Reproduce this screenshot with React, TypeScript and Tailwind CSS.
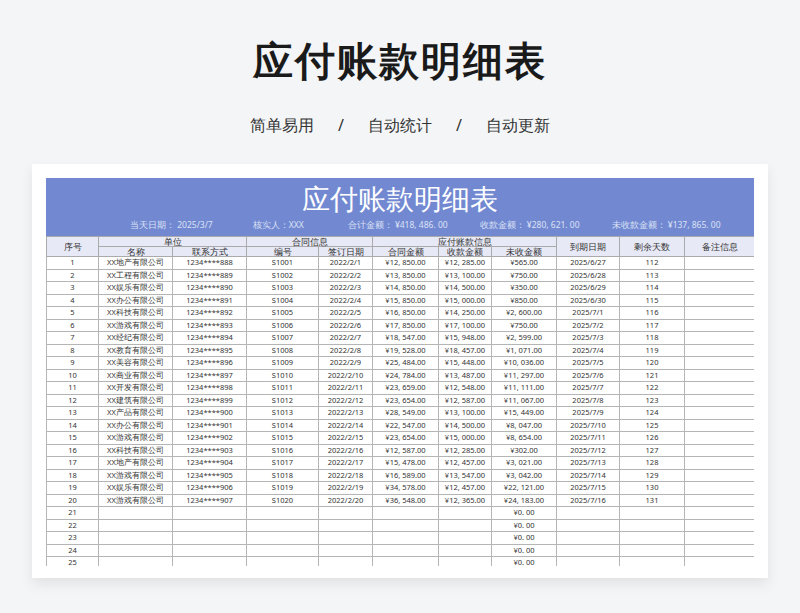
const companies = ["地产", "工程", "娱乐", "办公", "科技", "游戏", "经纪", "教育", "美容", "商业", "开发", "建筑", "产品", "办公", "游戏", "科技", "地产", "游戏", "娱乐", "游戏"];
const contract = [12850, 13850, 14850, 15850, 16850, 17850, 18547, 19528, 25484, 24784, 23659, 23654, 28549, 22547, 23654, 12587, 15478, 16589, 34578, 36548];
const received = [12285, 13100, 14500, 15000, 14250, 17100, 15948, 18457, 15448, 13487, 12548, 12587, 13100, 14500, 15000, 12285, 12457, 13547, 12457, 12365];
const dueDates = ["2025/6/27", "2025/6/28", "2025/6/29", "2025/6/30", "2025/7/1", "2025/7/2", "2025/7/3", "2025/7/4", "2025/7/5", "2025/7/6", "2025/7/7", "2025/7/8", "2025/7/9", "2025/7/10", "2025/7/11", "2025/7/12", "2025/7/13", "2025/7/14", "2025/7/15", "2025/7/16"];

const money = (n: number) =>
  "¥" + n.toLocaleString("en-US", { minimumFractionDigits: 2 }).replace(/,/g, ", ");

const widths = [52, 74, 74, 72, 54, 66, 53, 65, 63, 65, 70];

export default function App() {
  const rows = Array.from({ length: 25 }, (_, i) => i);
  return (
    <div className="h-[613px] w-[800px] overflow-hidden bg-[#f3f5f7] font-['Noto_Sans_CJK_SC',sans-serif]">
      <h1 className="pt-[36px] text-center text-[40px] font-bold leading-[48px] tracking-[2px] text-[#1a1a1a]">
        应付账款明细表
      </h1>
      <div className="mt-[29px] flex justify-center gap-[24px] text-[16px] leading-[24px] text-[#333]">
        <span>简单易用</span>
        <span>/</span>
        <span>自动统计</span>
        <span>/</span>
        <span>自动更新</span>
      </div>

      <div className="mx-[32px] mt-[27px] h-[414px] overflow-hidden bg-white px-[14px] pt-[14px] shadow-[0_6px_12px_rgba(0,0,0,0.08)]">
        <div className="h-[388px] overflow-hidden font-['Liberation_Serif','Noto_Sans_CJK_SC',serif]">
          <div className="bg-[#7289d2] text-white">
            <div className="pt-[4px] text-center font-['Noto_Sans_CJK_SC',sans-serif] text-[28px] font-light leading-[32px]">
              应付账款明细表
            </div>
            <div className="flex h-[22px] items-center gap-[24px] pl-[84px] text-[8.5px] text-[#dbe1f4]">
              <span>当天日期： 2025/3/7</span>
              <span className="ml-[16px]">核实人：XXX</span>
              <span className="ml-[20px]">合计金额： ¥418, 486. 00</span>
              <span className="ml-[8px]">收款金额： ¥280, 621. 00</span>
              <span className="ml-[8px]">未收款金额： ¥137, 865. 00</span>
            </div>
          </div>
          <table className="w-[708px] table-fixed border-collapse text-center text-[7.5px] text-[#333]">
            <colgroup>
              {widths.map((w, i) => (
                <col key={i} style={{ width: w }} />
              ))}
            </colgroup>
            <thead className="bg-[#e7e9f6] text-[8.5px] text-[#333]">
              <tr className="h-[10px] leading-[9px]">
                <th rowSpan={2} className="border border-[#aaa] p-0 font-normal">序号</th>
                <th colSpan={2} className="border border-[#aaa] p-0 font-normal">单位</th>
                <th colSpan={2} className="border border-[#aaa] p-0 font-normal">合同信息</th>
                <th colSpan={3} className="border border-[#aaa] p-0 font-normal">应付账款信息</th>
                <th rowSpan={2} className="border border-[#aaa] p-0 font-normal">到期日期</th>
                <th rowSpan={2} className="border border-[#aaa] p-0 font-normal">剩余天数</th>
                <th rowSpan={2} className="border border-[#aaa] p-0 font-normal">备注信息</th>
              </tr>
              <tr className="h-[10px] leading-[9px]">
                {["名称", "联系方式", "编号", "签订日期", "合同金额", "收款金额", "未收金额"].map((h) => (
                  <th key={h} className="border border-[#aaa] p-0 font-normal">{h}</th>
                ))}
              </tr>
            </thead>
            <tbody>
              {rows.map((i) => {
                const has = i < 20;
                const cells = has
                  ? [
                      String(i + 1),
                      `XX${companies[i]}有限公司`,
                      `1234****${888 + i}`,
                      `S${1001 + i}`,
                      `2022/2/${i + 1}`,
                      money(contract[i]),
                      money(received[i]),
                      money(contract[i] - received[i]),
                      dueDates[i],
                      String(112 + i),
                      "",
                    ]
                  : [String(i + 1), "", "", "", "", "", "", "¥0. 00", "", "", ""];
                return (
                  <tr key={i} className="h-[12.5px] leading-[11px]">
                    {cells.map((c, j) => (
                      <td key={j} className="overflow-hidden whitespace-nowrap border border-[#b5b5b5] p-0">
                        {c}
                      </td>
                    ))}
                  </tr>
                );
              })}
            </tbody>
          </table>
        </div>
      </div>
    </div>
  );
}
